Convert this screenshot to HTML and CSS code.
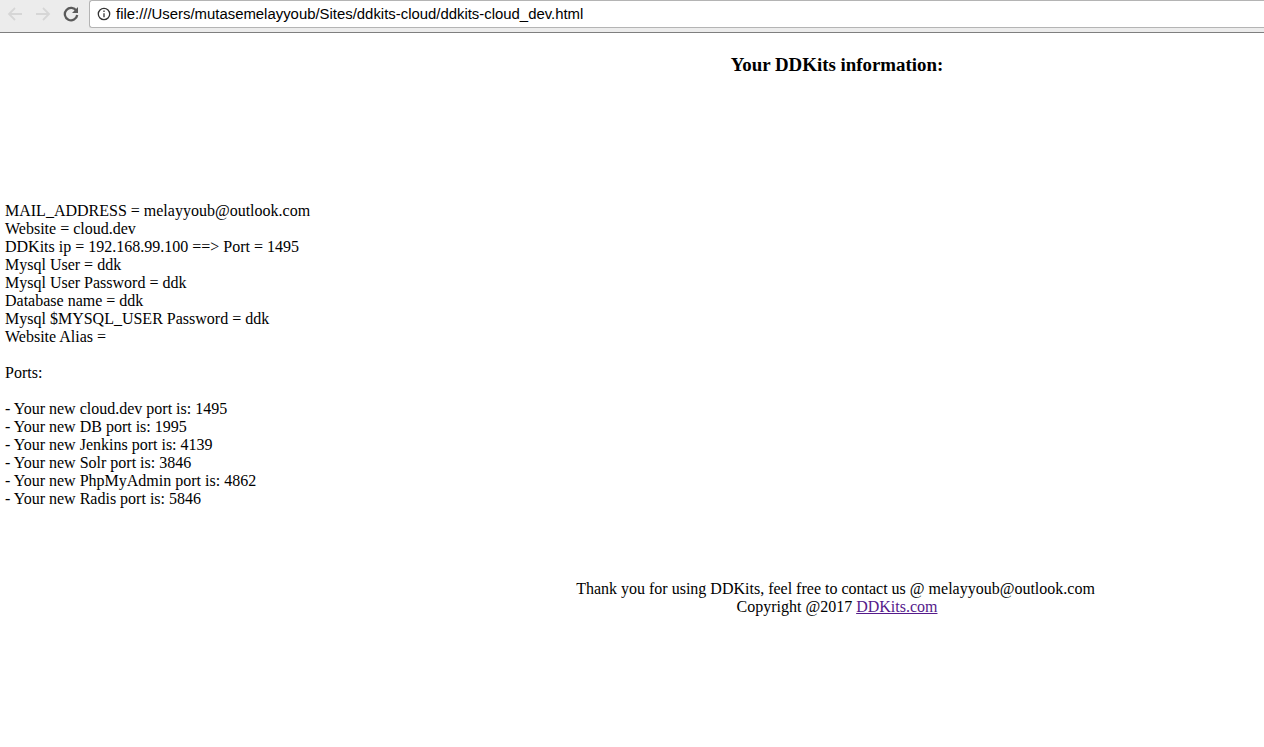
FILE: index.html
```html
<!DOCTYPE html>
<html lang="en">
<head>
<meta charset="utf-8">
<title>DDKits information</title>
<link rel="stylesheet" href="styles.css">
</head>
<body>
<header class="toolbar">
  <nav class="nav">
    <svg class="nav-icon" viewBox="0 0 16 16"><path class="disabled" d="M15 8H2M8 2 2 8l6 6"/></svg>
    <svg class="nav-icon" viewBox="0 0 16 16"><path class="disabled" d="M1 8h13M8 2l6 6-6 6"/></svg>
    <svg class="nav-icon" viewBox="0 0 16 16"><path class="active" d="M13.4 5A6.2 6.2 0 1 0 14.2 9"/><path class="fill" d="M15 1v6H9z"/></svg>
  </nav>
  <div class="address">
    <svg class="info" viewBox="0 0 14 14"><circle cx="7" cy="7" r="5.7"/><path d="M7 6.2v4M7 3.6v1.5"/></svg>
    <span class="url">file:///Users/mutasemelayyoub/Sites/ddkits-cloud/ddkits-cloud_dev.html</span>
  </div>
</header>
<main class="page">
  <h3 class="title">Your DDKits information:</h3>
  <p class="info-block">MAIL_ADDRESS = melayyoub@outlook.com<br>
  Website = cloud.dev<br>
  DDKits ip = 192.168.99.100 ==&gt; Port = 1495<br>
  Mysql User = ddk<br>
  Mysql User Password = ddk<br>
  Database name = ddk<br>
  Mysql $MYSQL_USER Password = ddk<br>
  Website Alias =<br>
  <br>
  Ports:<br>
  <br>
  - Your new cloud.dev port is: 1495<br>
  - Your new DB port is: 1995<br>
  - Your new Jenkins port is: 4139<br>
  - Your new Solr port is: 3846<br>
  - Your new PhpMyAdmin port is: 4862<br>
  - Your new Radis port is: 5846</p>
  <p class="footer">Thank you for using DDKits, feel free to contact us @ melayyoub@outlook.com
  <span class="copyright">Copyright @2017 <a href="#" class="link">DDKits.com</a></span></p>
</main>
</body>
</html>
```
FILE: styles.css
```css
html, body {
  margin: 0;
  padding: 0;
  background: #fff;
}
body {
  font-family: "Liberation Serif", "Times New Roman", serif;
  font-size: 16px;
  line-height: 18px;
  color: #000;
  height: 747px;
  overflow: hidden;
}
.toolbar {
  box-sizing: border-box;
  height: 33px;
  display: flex;
  align-items: flex-start;
  gap: 10px;
  padding: 0 0 0 7px;
  background: #ececec;
  border-bottom: 1px solid #7f7f7f;
}
.nav {
  display: flex;
  align-items: center;
  gap: 12px;
  height: 28px;
}
.nav-icon {
  width: 16px;
  height: 16px;
  fill: none;
  stroke-width: 1.8;
}
.disabled { stroke: #d6d6d6; }
.active { stroke: #5a5a5a; stroke-width: 2.3; }
.fill { fill: #5a5a5a; stroke: none; }
.address {
  box-sizing: border-box;
  flex: 1;
  height: 28px;
  display: flex;
  align-items: center;
  gap: 5px;
  padding-left: 7px;
  background: #fff;
  border: 1px solid #b4b4b4;
  border-right: 0;
  border-radius: 3px 0 0 3px;
}
.info {
  width: 14px;
  height: 14px;
  fill: none;
  stroke: #333;
  stroke-width: 1.3;
}
.url {
  font-family: "Liberation Sans", Arial, sans-serif;
  font-size: 14.9px;
}
.page {
  padding-left: 5px;
}
.title {
  margin: 0;
  padding: 23px 0 0 405px;
  font-size: 18.9px;
  line-height: 18px;
  font-weight: bold;
  text-align: center;
}
.info-block {
  margin: 0;
  padding-top: 128px;
}
.footer {
  margin: 0;
  padding: 72px 0 0 402px;
  text-align: center;
}
.copyright {
  display: block;
  padding-left: 3px;
}
.link { color: #551a8b; }
```
